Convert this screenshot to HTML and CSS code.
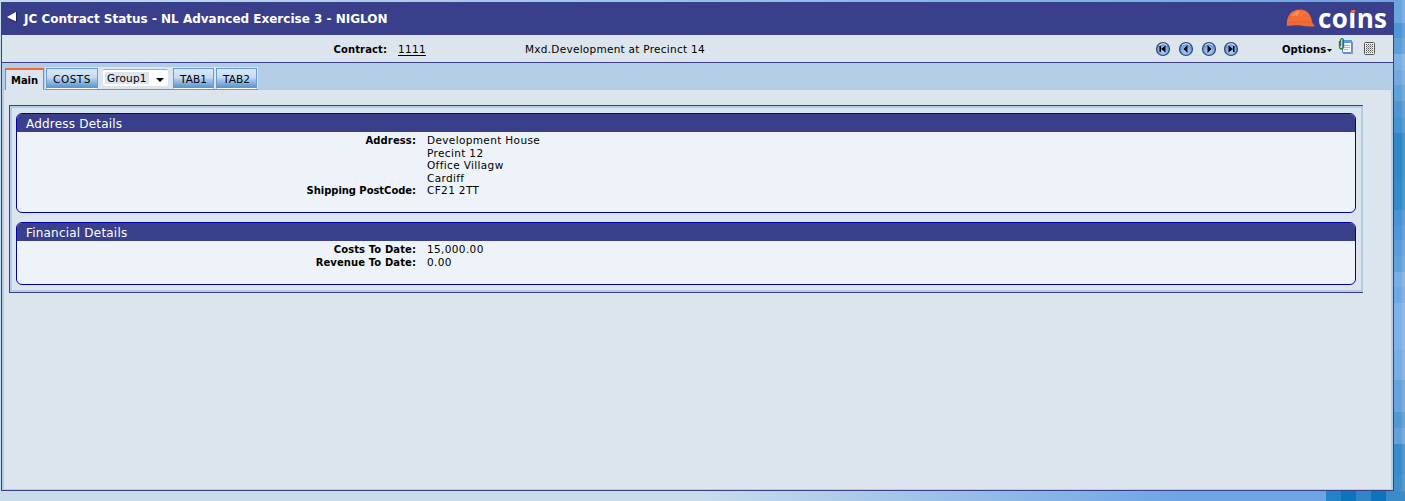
FILE: index.html
```html
<!DOCTYPE html>
<html lang="en">
<head>
<meta charset="utf-8">
<title>JC Contract Status</title>
<link rel="stylesheet" href="styles.css">
</head>
<body>
<div class="window">
  <header class="titlebar">
    <svg class="back" width="10" height="12" viewBox="0 0 10 12"><path d="M9 1v10L0 6z" fill="#fff"/><path d="M9.500 1v10L2 8" fill="none" stroke="#222750"/></svg>
    <h1 class="title">JC Contract Status - NL Advanced Exercise 3 - NIGLON</h1>
    <div class="logo">
      <svg class="hat" width="30" height="20" viewBox="0 0 30 20"><path d="M1 19C0 9 5 2.500 14 2.500c7.500 0 11 5 12 12 .5 2 1.500 3.500 3.500 4.500-5 1-10 .5-14.500-.5-5-.6-9-.3-14 .5z" fill="#f26a35"/><path d="M5 9c3-4.500 6-5.500 10-5-2 1-3 3-3 5-3-.5-5-.5-7 0z" fill="#f98e60"/><path d="M15 9.500c0-2.500 1.500-4 4-4" fill="none" stroke="#f98e60"/><path d="M2 16c7-2 14-1.500 23 0" fill="none" stroke="#e9622f"/></svg>
      <span class="brand">co<span class="i">ı</span>ns</span>
    </div>
  </header>
  <div class="infobar">
    <b class="contract-label">Contract:</b>
    <a class="contract-no">1111</a>
    <span class="contract-name">Mxd.Development at Precinct 14</span>
    <div class="nav">
      <svg width="16" height="16" viewBox="0 0 16 16"><use href="#ball"/><path d="M4.500 5h1.500v6h-1.500zM10.500 4.500v7L6 8z"/></svg>
      <svg width="16" height="16" viewBox="0 0 16 16"><use href="#ball"/><path d="M9.500 4v8L5.500 8z"/></svg>
      <svg width="16" height="16" viewBox="0 0 16 16"><use href="#ball"/><path d="M6.500 4v8l4-4z"/></svg>
      <svg width="16" height="16" viewBox="0 0 16 16"><use href="#ball"/><path d="M10 5h1.500v6H10zM5.500 4.500v7L10 8z"/></svg>
    </div>
    <b class="options">Options</b>
    <svg class="caret" width="5" height="3" viewBox="0 0 5 3"><path d="M0 0h5L2.500 3z"/></svg>
    <svg class="note" width="15" height="16" viewBox="0 0 15 16"><path d="M4.500 2.500h9v12h-9z" fill="#f5faff" stroke="#5b8fd0"/><path d="M4 2h10v3H4z" fill="#5c9ae4"/><path d="M6 7.500h6M6 9.500h6M6 11.500h4" stroke="#9ab8d8"/><path d="M14.500 4v11.500H5" stroke="#858ea0" fill="none"/><path d="M1.500 3v5c0 4 4 4 4 0V2.500c0-2.500-3-2.500-3 0V8" fill="none" stroke="#397a31" stroke-width="1.300"/></svg>
    <svg class="keypad" width="11" height="13" viewBox="0 0 11 13"><rect x=".5" y=".5" width="10" height="12" rx="1" fill="#efefef" stroke="#555"/><path d="M2 2.500h7M2 4.500h7M2 6.500h7M2 8.500h7M2 10.500h7" stroke="#555" stroke-dasharray="1 1"/><path d="M3 3.500h6M3 5.500h6M3 7.500h6M3 9.500h6" stroke="#999" stroke-dasharray="1 1"/></svg>
  </div>
  <main class="content">
    <nav class="tabs">
      <div class="tab active">Main</div>
      <div class="tabgroup">
        <div class="tab costs">COSTS</div>
        <div class="select"><span class="picked">Group1</span><svg width="8" height="4" viewBox="0 0 8 4"><path d="M0 0h8L4 4z"/></svg></div>
        <div class="tab tab1">TAB1</div>
        <div class="tab tab2">TAB2</div>
      </div>
    </nav>
    <div class="page">
      <div class="frame">
        <section class="panel address">
          <h2>Address Details</h2>
          <dl>
            <dt>Address:</dt><dd>Development House<br>Precint 12<br>Office Villagw<br>Cardiff</dd>
            <dt class="postcode">Shipping PostCode:</dt><dd>CF21 2TT</dd>
          </dl>
        </section>
        <section class="panel financial">
          <h2>Financial Details</h2>
          <dl>
            <dt>Costs To Date:</dt><dd>15,000.00</dd>
            <dt>Revenue To Date:</dt><dd>0.00</dd>
          </dl>
        </section>
      </div>
    </div>
  </main>
</div>
<svg class="defs" width="0" height="0"><defs>
  <radialGradient id="blue" cx=".5" cy=".65" r=".6"><stop offset="0" stop-color="#b4dcff"/><stop offset=".6" stop-color="#78aaee"/><stop offset="1" stop-color="#4a7ccc"/></radialGradient>
  <g id="ball"><circle cx="8" cy="8" r="6.500" fill="url(#blue)" stroke="#3b4c66" stroke-width="1.200"/><path d="M4 4.500Q8 1 12 4.500" fill="none" stroke="#d8eaff"/></g>
</defs></svg>
</body>
</html>
```
FILE: styles.css
```css
* { box-sizing: border-box; }
body {
  margin: 0;
  height: 501px;
  overflow: hidden;
  padding: 2px 0 0 1px;
  font: 10px/12px "DejaVu Sans", sans-serif;
  color: #000;
  background:
    linear-gradient(90deg, #2482c8 0 15px, #0c74bd 15px 30px, #2f86c7 30px 45px, #0c74bd 45px 60px, #3a8bc8 60px) 1326px 491px / 79px 10px no-repeat,
    linear-gradient(#ffffff1c, #ffffff1c) 1402px 0 / 3px 501px no-repeat,
    linear-gradient(#6aa6de 0 23px, #4d97d4 23px 38px, #5d9fd8 38px 54px, #7bb0e2 54px 70px, #72a9df 70px 85px, #5fa1d9 85px 101px, #5097d2 101px 117px, #4593cf 117px 133px, #3089c5 133px 180px, #348bc8 180px 210px, #4893d0 210px 225px, #4f98d5 225px 240px, #5a9dd8 240px 256px, #62a2da 256px 272px, #7aade2 272px 287px, #72a8e2 287px 303px, #7fb1ea 303px 350px, #7aade4 350px 380px, #69a3dc 380px 412px, #5299d2 412px 428px, #62a2da 428px 444px, #3a8cc8 444px 475px, #3f8fcb 475px) 1394px 0 / 11px 501px no-repeat,
    linear-gradient(90deg, #c5daee 0, #6aa6de 1405px) 0 0 / 1405px 2px no-repeat,
    linear-gradient(90deg, #c8dcec 0, #c8dcec 700px, #6ca4e4 1190px);
}
.window {
  width: 1393px;
  height: 489px;
  border: 1px solid #393f8b;
  border-top: 0;
  background: #dce4ed;
  display: flex;
  flex-direction: column;
}
.titlebar {
  height: 33px;
  flex: none;
  background: #393f8b;
  display: flex;
  padding-left: 5px;
}
.back { margin-top: 9px; }
.title {
  margin: 0 auto 0 7px;
  padding-top: 9px;
  font-size: 12px;
  line-height: 16px;
  color: #fff;
  white-space: nowrap;
}
.logo { display: flex; width: 107px; padding-top: 5px; }
.hat { flex: none; }
.brand {
  font: bold 26px/24px "Open Sans", sans-serif;
  letter-spacing: 0.4px;
  color: #fff;
  margin: -1px 0 0 2px;
}
.brand .i { position: relative; }
.brand .i::before {
  content: "";
  position: absolute;
  left: 3px;
  top: 10px;
  width: 4px;
  height: 3px;
  background: #f26a35;
  transform: skewX(-25deg);
}
.infobar {
  height: 28px;
  flex: none;
  border-bottom: 1px solid #393f8b;
  display: flex;
  align-items: flex-start;
  padding-top: 9px;
}
.contract-label { width: 385px; text-align: right; letter-spacing: 0.1px; }
.contract-no { margin: -1px 0 0 11px; width: 127px; font-size: 10.5px; letter-spacing: 0.3px; text-decoration: underline; text-underline-offset: 2px; }
.contract-name { margin-top: -1px; width: 630px; white-space: nowrap; font-size: 10.5px; letter-spacing: 0.27px; }
.nav { display: flex; gap: 7px; margin-top: -3px; width: 127px; }
.nav svg { flex: none; }
.nav svg + svg { margin-right: -0.3px; }
.options { width: 45px; letter-spacing: 0.05px; }
.caret { margin: 5px 6px 0 0; }
.note { margin: -6px 10px 0 0; }
.keypad { margin: -2px 0 0 1px; }
.content {
  flex: 1;
  border: 2px solid #b3cde6;
  border-top: 0;
  border-bottom-width: 1px;
}
.tabs {
  height: 27px;
  background: #b3cde6;
  display: flex;
  padding: 4px 0 0;
}
.tab {
  display: flex;
  justify-content: center;
  height: 21px;
  border: 1px solid #659bd0;
  border-bottom: 1px solid #fff;
  background: linear-gradient(#dbe8f8 0, #c6daf0 45%, #aac9e8 55%, #5d98cf 95%);
  padding-top: 4px;
  font-size: 10.5px;
  letter-spacing: 0.1px;
}
.active {
  width: 39px;
  height: 22px;
  margin: 1px 0 0 1px;
  border: 1px solid #f26a35;
  border-top-width: 2px;
  border-bottom: 0;
  background: #dce4ed;
  font-weight: bold;
  font-size: 10px;
  padding-top: 5px;
  letter-spacing: -0.1px;
}
.tabgroup {
  display: flex;
  margin-left: 1px;
  width: 213px;
  height: 23px;
  padding: 1px 0 0 1px;
  background: #dce4ed;
  border-bottom: 1px solid #659bd0;
}
.costs { width: 52px; letter-spacing: 0.5px; }
.select {
  width: 65px;
  height: 17px;
  margin: 1px 5px 0 5px;
  background: #fff;
  border-top: 1px solid #aaa;
  border-radius: 2px;
  display: flex;
  align-items: flex-start;
  padding: 2px 3px 0 2px;
  font-size: 10.5px;
  letter-spacing: 0.15px;
}
.picked { width: 44px; height: 12px; background: #dce4ed; padding-left: 2px; line-height: 12px; }
.select svg { margin: 6px 0 0 7px; }
.tab1 { width: 41px; }
.tab2 { width: 41px; margin-left: 2px; }
.page { padding: 15px 0 0 5px; }
.frame {
  width: 1354px;
  height: 188px;
  border: 1px solid #393f8b;
  border-right: 0;
  box-shadow: inset 2px 2px #b3cde6, inset -2px -2px #b3cde6;
  padding: 7px 7px 0 6px;
}
.panel {
  border: 1px solid #0000ac;
  border-radius: 6px;
  background: #edf3f8;
  overflow: hidden;
}
.address { height: 100px; margin-bottom: 9px; }
.financial { height: 63px; }
.panel h2 {
  margin: 0;
  height: 18px;
  padding-left: 9px;
  background: #393f8b;
  color: #fff;
  font-weight: normal;
  font-size: 12px;
  line-height: 20px;
  letter-spacing: 0.2px;
}
.panel dl {
  display: grid;
  grid-template-columns: 399px 1fr;
  column-gap: 11px;
  margin: 3px 0 0;
  line-height: 12.5px;
}
dt { text-align: right; font-weight: bold; letter-spacing: 0.1px; }
.postcode { letter-spacing: -0.05px; }
dd { margin: -1px 0 1px; font-size: 10.5px; letter-spacing: 0.36px; }
.defs { display: block; }
```
